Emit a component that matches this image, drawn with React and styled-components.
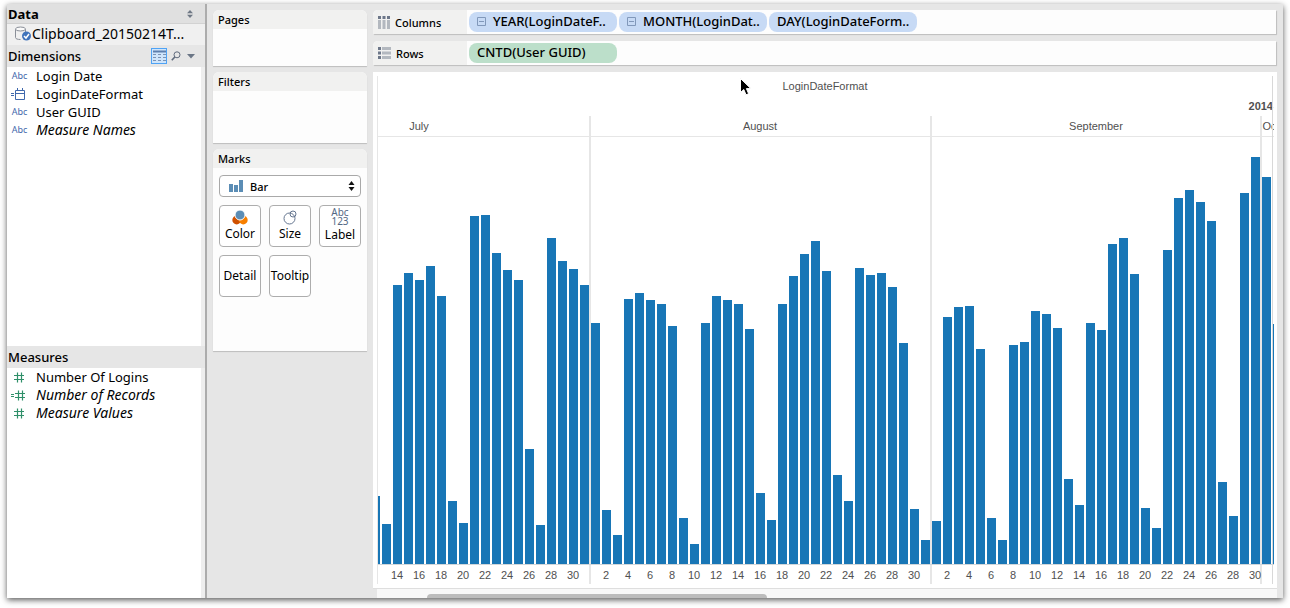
import React from "react"
import styled, { createGlobalStyle } from "styled-components"

const GlobalStyle = createGlobalStyle`
  * {
    box-sizing: border-box;
  }
  body {
    margin: 0;
    background: #ffffff;
    color: #000000;
    font-family: "Lucida Grande", "Noto Sans", "Open Sans", sans-serif;
    font-size: 13px;
  }
  button,
  select {
    font: inherit;
    color: inherit;
  }
`

const Page = styled.div`
  display: flex;
  min-height: 100vh;
  padding: 4px 7px 10px;
`

const Workbook = styled.div`
  display: flex;
  flex: 1;
  min-width: 0;
  background: #e6e6e6;
  box-shadow: 0 2px 6px rgba(0, 0, 0, 0.65);
`

/* data pane */

const DataPane = styled.aside`
  display: flex;
  flex-direction: column;
  flex: none;
  width: 200px;
  background: #eeeeee;
  border-right: 2px solid #acacac;
`

const PaneTitle = styled.header`
  display: flex;
  align-items: center;
  justify-content: space-between;
  height: 20px;
  padding: 0 11px 0 1px;
  background: #e0e0e0;
  border-bottom: 1px solid #d2d2d2;
  font-weight: bold;
`

const PlainHeading = styled.h2`
  flex: 1;
  margin: 0;
  font-size: 13px;
  font-weight: ${(props) => (props.$bold ? "bold" : 500)};
  line-height: 18px;
`

const DataSource = styled.button`
  display: flex;
  align-items: center;
  gap: 1px;
  height: 21px;
  padding: 0 0 2px 8px;
  border: 0;
  background: #f0f0f0;
  font-size: 14px;
  line-height: 19px;
  white-space: nowrap;
`

const SectionBar = styled.div`
  display: flex;
  align-items: center;
  gap: 3px;
  height: 22px;
  padding: 0 8px 0 1px;
  background: #e6e6e6;
`

const IconButton = styled.button`
  display: flex;
  align-items: center;
  justify-content: center;
  width: ${(props) => props.$width || 12}px;
  height: 16px;
  padding: 0;
  border: ${(props) => (props.$active ? "1px solid #4fa3f5" : "0")};
  background: ${(props) => (props.$active ? "#cfe5fb" : "transparent")};
`

const FieldList = styled.ul`
  flex: ${(props) => (props.$grow ? "1" : "none")};
  min-height: ${(props) => (props.$grow ? "0" : "279px")};
  margin: 0 4px 0 0;
  padding: 0;
  background: #ffffff;
  list-style: none;
`

const FieldItem = styled.li`
  display: flex;
  align-items: center;
  height: 18px;
  padding-left: 2px;
  font-size: ${(props) => (props.$italic ? 14 : 13)}px;
  font-style: ${(props) => (props.$italic ? "italic" : "normal")};
  line-height: 18px;
`

const FieldIcon = styled.span`
  display: flex;
  justify-content: center;
  flex: none;
  width: 21px;
  margin-right: 6px;
  color: #3f68ac;
  font-size: 9px;
  font-style: normal;
`

/* cards */

const CardColumn = styled.div`
  display: flex;
  flex-direction: column;
  flex: none;
  gap: 6px;
  width: 166px;
  padding: 6px;
`

const Card = styled.section`
  height: ${(props) => props.$height}px;
  border-radius: 6px 6px 0 0;
  background: #fdfdfd;
  box-shadow: 0 1px 1px #bdbdbd;
  overflow: hidden;
`

const CardTitle = styled.h3`
  height: 19px;
  margin: 0;
  padding-left: 5px;
  background: #f1f1f0;
  font-size: 11px;
  font-weight: 500;
  line-height: 20px;
`

const MarkBody = styled.div`
  display: grid;
  grid-template-columns: repeat(3, 42px);
  gap: 8px;
  padding: 7px 6px;
`

const MarkType = styled.label`
  display: flex;
  align-items: center;
  grid-column: 1 / -1;
  height: 22px;
  padding: 0 5px 0 9px;
  border: 1px solid #a9a9a9;
  border-radius: 4px;
  background: #ffffff;
`

const MarkSelect = styled.select`
  flex: 1;
  min-width: 0;
  padding: 0 0 0 7px;
  border: 0;
  appearance: none;
  background: transparent;
  font-size: 11px;
  font-weight: 500;
`

const MarkButton = styled.button`
  display: flex;
  flex-direction: column;
  align-items: center;
  justify-content: center;
  height: 42px;
  padding: 0;
  border: 1px solid #adadad;
  border-radius: 4px;
  background: #ffffff;
  font-size: 12px;
  line-height: 18px;
`

const LabelGlyph = styled.span`
  color: #536884;
  font-size: 10px;
  line-height: 9px;
`

/* shelves and view */

const Main = styled.main`
  display: flex;
  flex-direction: column;
  flex: 1;
  gap: 7px;
  min-width: 0;
  padding: 6px 6px 0 0;
`

const Shelf = styled.section`
  display: flex;
  height: 24px;
  border-radius: 5px 0 0 0;
  background: #fdfdfd;
  box-shadow: 1px 1px 1px #bdbdbd;
  margin-right: 1px;
`

const ShelfName = styled.h3`
  display: flex;
  align-items: center;
  gap: 5px;
  width: 94px;
  margin: 0;
  padding-left: 5px;
  border-radius: 5px 0 0 0;
  background: #f1f1f0;
  font-size: 11px;
  font-weight: 500;
`

const Pills = styled.div`
  display: flex;
  align-items: center;
  gap: 2px;
  padding-left: 2px;
`

const Pill = styled.button`
  display: flex;
  align-items: center;
  gap: 7px;
  width: 148px;
  height: 20px;
  padding: 0 0 1px 8px;
  border: 0;
  border-radius: 8px;
  background: ${(props) => (props.$measure ? "#bcdfca" : "#c7daf5")};
  font-weight: 500;
  line-height: 19px;
  white-space: nowrap;
`

const ViewArea = styled.section`
  position: relative;
  display: flex;
  flex-direction: column;
  flex: 1;
`

const View = styled.div`
  height: 517px;
  padding: 4px 3px 4px 4px;
  background: #ffffff;
  border-bottom: 1px solid #dedede;
`

const ViewClip = styled.div`
  height: 100%;
  border-left: 1px solid #e6e6e6;
  overflow: hidden;
`

const ScrollTrack = styled.div`
  display: flex;
  align-items: flex-end;
  flex: 1;
  margin-left: 4px;
  padding-left: 50px;
  background: #f8f8f8;
`

const ScrollThumb = styled.div`
  width: 40%;
  height: 4px;
  border-radius: 4px 4px 0 0;
  background: #bcbcbc;
`

const Pointer = styled.svg`
  position: absolute;
  left: 366px;
  top: 5px;
`

const ChartText = styled.text`
  fill: #505050;
  font-family: "Liberation Sans", Arial, sans-serif;
  font-size: 11px;
  font-weight: ${(props) => (props.$bold ? "bold" : "normal")};
`

const months = [
  {
    name: "July",
    firstDay: 12,
    labelX: 41,
    values: [
      68, 40, 279, 291, 284, 298, 268, 63, 41, 348, 349, 311, 294, 284, 115, 39,
      326, 303, 295, 279,
    ],
  },
  {
    name: "August",
    firstDay: 1,
    labelX: 382,
    values: [
      241, 54, 29, 265, 271, 264, 260, 238, 46, 20, 241, 268, 264, 260, 235, 71,
      44, 260, 288, 310, 323, 293, 89, 63, 296, 289, 291, 277, 221, 55, 24,
    ],
  },
  {
    name: "September",
    firstDay: 1,
    labelX: 718,
    values: [
      43, 247, 257, 258, 215, 46, 24, 219, 222, 253, 250, 236, 85, 59, 241, 234,
      320, 326, 290, 56, 36, 314, 366, 374, 362, 343, 82, 48, 371, 407,
    ],
  },
  { name: "October", firstDay: 1, labelX: 904, values: [387, 240] },
]

const PITCH = 11
const BAR_WIDTH = 9
const BASELINE = 488

const bars = []
months.forEach((month) => {
  month.start = bars.length * PITCH - 7
  month.values.forEach((value, i) => {
    bars.push({ value, day: month.firstDay + i, x: bars.length * PITCH - 7 })
  })
})

const LoginsChart = () => (
  <svg width="896" height="509" role="img" aria-label="Distinct users by day">
    <path d="M0 60.5H896" stroke="#e6e6e6" />
    {months.slice(1).map((month) => (
      <rect
        key={month.name}
        x={month.start - 2}
        y="40"
        width="2"
        height="469"
        fill="#e6e6e6"
      />
    ))}
    <ChartText x="447" y="14" textAnchor="middle">
      LoginDateFormat
    </ChartText>
    <ChartText x="895" y="34" textAnchor="end" $bold>
      2014
    </ChartText>
    {months.map((month) => (
      <ChartText key={month.name} x={month.labelX} y="54" textAnchor="middle">
        {month.name}
      </ChartText>
    ))}
    {bars.map((bar) => (
      <rect
        key={bar.x}
        x={bar.x}
        y={BASELINE - bar.value}
        width={BAR_WIDTH}
        height={bar.value}
        fill="#1876b6"
      />
    ))}
    <path d="M0 488.5H896" stroke="#d0d6da" />
    {bars
      .filter((bar) => bar.day % 2 === 0 && bar.x > 0 && bar.x < 890)
      .map((bar) => (
        <ChartText key={bar.x} x={bar.x + 4} y="503" textAnchor="middle">
          {bar.day}
        </ChartText>
      ))}
    <path d="M894.5 0V509" stroke="#d8d8d8" />
  </svg>
)

const UpDownIcon = ({ color }) => (
  <svg width="7" height="10" viewBox="0 0 7 10" fill={color}>
    <path d="M0.5 4L3.5 0L6.5 4ZM0.5 6L3.5 10L6.5 6Z" />
  </svg>
)

const SmallUpDownIcon = () => (
  <svg width="6" height="8" viewBox="0 0 6 8" fill="#6f7885">
    <path d="M0 3.3L3 0L6 3.3ZM0 4.7L3 8L6 4.7Z" />
  </svg>
)

const DatabaseIcon = () => (
  <svg width="16" height="15" viewBox="0 0 16 15" fill="none">
    <path
      d="M0.5 3V11.5C0.5 12.8 2.5 13.5 5.5 13.5M10.5 3V6"
      stroke="#8a8f98"
    />
    <ellipse cx="5.5" cy="3" rx="5" ry="2" fill="#fafafa" stroke="#8a8f98" />
    <circle cx="11.5" cy="10" r="4.5" fill="#4174bb" />
    <path d="M9 10L11 12L14 8" stroke="#ffffff" strokeWidth="1.5" />
  </svg>
)

const TableIcon = () => (
  <svg width="13" height="12" viewBox="0 0 13 12" fill="none">
    <path d="M0 1.5H13" stroke="#5d7fae" strokeWidth="2" />
    <path
      d="M0 4.5H13M0 7.5H13M0 10.5H13"
      stroke="#7b93b5"
      strokeDasharray="3 2"
    />
  </svg>
)

const SearchIcon = () => (
  <svg width="10" height="10" viewBox="0 0 10 10" fill="none" stroke="#606b7d">
    <circle cx="6" cy="3.8" r="3" />
    <path d="M3.8 6L0.8 9.2" strokeWidth="1.6" />
  </svg>
)

const CaretIcon = () => (
  <svg width="8" height="5" viewBox="0 0 8 5" fill="#6b7686">
    <path d="M0 0H8L4 4.5Z" />
  </svg>
)

const CalendarIcon = () => (
  <svg width="17" height="12" viewBox="0 0 17 12" fill="none" stroke="#3f68ac">
    <path d="M0 5.5H3M0 7.5H3M4.5 2.5H13.5V11.5H4.5ZM4.5 5.5H13.5M6.5 0V3M11.5 0V3" />
  </svg>
)

const NumberIcon = ({ calculated }) => (
  <svg width="17" height="11" viewBox="0 0 17 11" fill="none" stroke="#2f8f69">
    <path
      d="M3 3.5H13M3 7.5H13M6.5 0.5V10.5M10.5 0.5V10.5"
      strokeWidth="1.2"
      transform={calculated ? "translate(1 0)" : undefined}
    />
    {calculated && <path d="M0 4.5H3M0 6.5H3" />}
  </svg>
)

const BarIcon = () => (
  <svg width="14" height="12" viewBox="0 0 14 12" fill="#5b8db5">
    <path d="M0 4H4V12H0ZM5 5H9V12H5ZM10 0H14V12H10Z" />
    <path d="M4.5 0V12M9.5 0V12" stroke="#ffffff" />
  </svg>
)

const ColorIcon = () => (
  <svg width="16" height="15" viewBox="0 0 16 15">
    <circle cx="4.7" cy="10" r="4.4" fill="#cf5000" />
    <circle cx="11.3" cy="10" r="4.4" fill="#f77f00" />
    <circle cx="8" cy="5" r="5" fill="#5b8db5" stroke="#ffffff" />
  </svg>
)

const SizeIcon = () => (
  <svg width="14" height="15" viewBox="0 0 14 15" fill="none" stroke="#64758f">
    <circle cx="6.5" cy="8.5" r="5.5" />
    <circle cx="10" cy="4" r="3" />
  </svg>
)

const CollapseIcon = () => (
  <svg width="9" height="9" viewBox="0 0 9 9" fill="none" stroke="#8198ba">
    <path d="M0.5 0.5H8.5V8.5H0.5ZM2 4.5H7" />
  </svg>
)

const ColumnsIcon = () => (
  <svg width="12" height="13" viewBox="0 0 12 13">
    <path d="M0 0H3V3H0ZM4.5 0H7.5V3H4.5ZM9 0H12V3H9Z" fill="#6d7789" />
    <path d="M0 4H3V13H0ZM4.5 4H7.5V13H4.5ZM9 4H12V13H9Z" fill="#b3b8bf" />
  </svg>
)

const RowsIcon = () => (
  <svg width="13" height="12" viewBox="0 0 13 12">
    <path d="M0 0H3V3H0ZM0 4.5H3V7.5H0ZM0 9H3V12H0Z" fill="#6d7789" />
    <path d="M4 0H13V3H4ZM4 4.5H13V7.5H4ZM4 9H13V12H4Z" fill="#b3b8bf" />
  </svg>
)

const dimensions = [
  { name: "Login Date", icon: "Abc" },
  { name: "LoginDateFormat", icon: <CalendarIcon /> },
  { name: "User GUID", icon: "Abc" },
  { name: "Measure Names", icon: "Abc", italic: true },
]

const measures = [
  { name: "Number Of Logins", icon: <NumberIcon /> },
  { name: "Number of Records", icon: <NumberIcon calculated />, italic: true },
  { name: "Measure Values", icon: <NumberIcon />, italic: true },
]

const Fields = ({ fields, grow }) => (
  <FieldList $grow={grow}>
    {fields.map((field) => (
      <FieldItem key={field.name} $italic={field.italic}>
        <FieldIcon>{field.icon}</FieldIcon>
        {field.name}
      </FieldItem>
    ))}
  </FieldList>
)

const App = () => (
  <>
    <GlobalStyle />
    <Page>
      <Workbook>
        <DataPane>
          <PaneTitle>
            <PlainHeading $bold>Data</PlainHeading>
            <IconButton $width={8} aria-label="Switch pane">
              <SmallUpDownIcon />
            </IconButton>
          </PaneTitle>
          <DataSource>
            <DatabaseIcon />
            Clipboard_20150214T...
          </DataSource>
          <SectionBar>
            <PlainHeading>Dimensions</PlainHeading>
            <IconButton $width={16} $active aria-label="View data">
              <TableIcon />
            </IconButton>
            <IconButton aria-label="Find field">
              <SearchIcon />
            </IconButton>
            <IconButton aria-label="Pane menu">
              <CaretIcon />
            </IconButton>
          </SectionBar>
          <Fields fields={dimensions} />
          <SectionBar>
            <PlainHeading>Measures</PlainHeading>
          </SectionBar>
          <Fields fields={measures} grow />
        </DataPane>

        <CardColumn>
          <Card $height={56}>
            <CardTitle>Pages</CardTitle>
          </Card>
          <Card $height={71}>
            <CardTitle>Filters</CardTitle>
          </Card>
          <Card $height={202}>
            <CardTitle>Marks</CardTitle>
            <MarkBody>
              <MarkType>
                <BarIcon />
                <MarkSelect aria-label="Mark type">
                  <option>Bar</option>
                </MarkSelect>
                <UpDownIcon color="#111111" />
              </MarkType>
              <MarkButton>
                <ColorIcon />
                Color
              </MarkButton>
              <MarkButton>
                <SizeIcon />
                Size
              </MarkButton>
              <MarkButton>
                <LabelGlyph>Abc</LabelGlyph>
                <LabelGlyph>123</LabelGlyph>
                Label
              </MarkButton>
              <MarkButton>Detail</MarkButton>
              <MarkButton>Tooltip</MarkButton>
            </MarkBody>
          </Card>
        </CardColumn>

        <Main>
          <Shelf>
            <ShelfName>
              <ColumnsIcon />
              Columns
            </ShelfName>
            <Pills>
              <Pill>
                <CollapseIcon />
                YEAR(LoginDateF..
              </Pill>
              <Pill>
                <CollapseIcon />
                MONTH(LoginDat..
              </Pill>
              <Pill>DAY(LoginDateForm..</Pill>
            </Pills>
          </Shelf>
          <Shelf>
            <ShelfName>
              <RowsIcon />
              Rows
            </ShelfName>
            <Pills>
              <Pill $measure>CNTD(User GUID)</Pill>
            </Pills>
          </Shelf>
          <ViewArea>
            <View>
              <ViewClip>
                <LoginsChart />
              </ViewClip>
            </View>
            <ScrollTrack>
              <ScrollThumb />
            </ScrollTrack>
            <Pointer width="14" height="20" viewBox="0 0 14 20">
              <path
                d="M1.5 1.5V15.5L4.8 12.5L7 17.8L9.6 16.7L7.4 11.6H11.8Z"
                fill="#000000"
                stroke="#ffffff"
              />
            </Pointer>
          </ViewArea>
        </Main>
      </Workbook>
    </Page>
  </>
)

export default App
